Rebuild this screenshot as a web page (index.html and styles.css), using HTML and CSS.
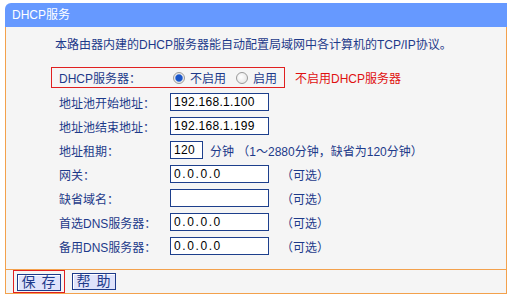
FILE: index.html
```html
<!DOCTYPE html>
<html lang="zh">
<head>
<meta charset="utf-8">
<title>DHCP服务</title>
<link rel="stylesheet" href="styles.css">
</head>
<body>
<div class="panel">
  <div class="head">DHCP服务</div>
  <div class="body">
    <p class="desc">本路由器内建的DHCP服务器能自动配置局域网中各计算机的TCP/IP协议。</p>
    <div class="switch-row">
      <div class="switch-box">
        <span class="label">DHCP服务器：</span>
        <span class="radio"><span class="dot on"></span>不启用</span>
        <span class="radio second"><span class="dot"></span>启用</span>
      </div>
      <span class="warn">不启用DHCP服务器</span>
    </div>
    <div class="row"><span class="label">地址池开始地址：</span><span class="field">192.168.1.100</span></div>
    <div class="row"><span class="label">地址池结束地址：</span><span class="field">192.168.1.199</span></div>
    <div class="row"><span class="label">地址租期：</span><span class="field short">120</span><span class="note unit">分钟 （1～2880分钟，缺省为120分钟）</span></div>
    <div class="row"><span class="label">网关：</span><span class="field zero">0.0.0.0</span><span class="note opt">（可选）</span></div>
    <div class="row"><span class="label">缺省域名：</span><span class="field"></span><span class="note opt">（可选）</span></div>
    <div class="row"><span class="label">首选DNS服务器：</span><span class="field zero">0.0.0.0</span><span class="note opt">（可选）</span></div>
    <div class="row"><span class="label">备用DNS服务器：</span><span class="field zero">0.0.0.0</span><span class="note opt">（可选）</span></div>
  </div>
  <div class="foot">
    <span class="hl"><span class="btn">保 存</span></span>
    <span class="btn help">帮 助</span>
  </div>
</div>
</body>
</html>
```
FILE: styles.css
```css
html, body {
  margin: 0;
  padding: 0;
  background: #ffffff;
}
body {
  font-family: "Liberation Sans", "Noto Sans CJK SC", sans-serif;
  font-size: 12px;
  color: #1d3a8a;
}
.panel {
  margin: 3px 0 0 5px;
  width: 502px;
}
.head {
  height: 24px;
  line-height: 24px;
  background: #6699ff;
  color: #ffffff;
  border-radius: 6px 0 0 0;
  padding-left: 7px;
  font-size: 12px;
}
.body {
  background: #f5f5f5;
  border-left: 1px solid #f3a14c;
  border-right: 1px solid #f3a14c;
  padding: 0 0 11px 0;
}
.desc {
  margin: 0;
  padding: 9px 0 0 49px;
  line-height: 18px;
}
.switch-row {
  display: flex;
  align-items: center;
  margin: 13px 0 2px 45px;
}
.switch-box {
  box-sizing: border-box;
  width: 234px;
  height: 21px;
  border: 1px solid #e02020;
  display: flex;
  align-items: center;
  padding-left: 7px;
}
.label {
  width: 111px;
  flex: none;
}
.radio {
  display: flex;
  align-items: center;
  margin-left: 3px;
}
.radio.second {
  margin-left: 10px;
}
.dot {
  box-sizing: border-box;
  width: 12px;
  height: 12px;
  border-radius: 50%;
  border: 1px solid #9a9a9a;
  background: radial-gradient(circle at 40% 40%, #ffffff 0%, #e6e6e6 80%);
  margin-right: 5px;
  display: inline-block;
}
.dot.on {
  background: radial-gradient(circle, #1a56c8 0 3px, #6f95e0 3.6px, #e8e8e8 4.2px, #f4f4f4 100%);
}
.warn {
  color: #e01010;
  margin-left: 10px;
}
.row {
  display: flex;
  align-items: center;
  height: 24px;
  padding-left: 53px;
}
.field {
  box-sizing: border-box;
  width: 99px;
  height: 18px;
  background: #ffffff;
  border: 1px solid #1d3f8c;
  padding-left: 3px;
  line-height: 16px;
  color: #000000;
  font-family: "Liberation Sans", sans-serif;
  font-size: 12px;
  letter-spacing: 0.3px;
}
.field.zero {
  letter-spacing: 1.6px;
}
.field.short {
  width: 33px;
}
.note.unit {
  margin-left: 7px;
}
.note.opt {
  margin-left: 12px;
}
.foot {
  background: #f5f5f5;
  border: 1px solid #f3a14c;
  height: 23px;
  display: flex;
  align-items: flex-start;
  padding-left: 7px;
}
.hl {
  box-sizing: border-box;
  height: 23px;
  border: 1px solid #e02020;
  padding: 3px;
  display: flex;
}
.btn {
  box-sizing: border-box;
  width: 44px;
  height: 17px;
  background: #dfe3fb;
  border: 1px solid #1d3a8a;
  box-shadow: inset 1px 1px 0 #ffffff;
  color: #1d3a8a;
  font-size: 14px;
  line-height: 15px;
  letter-spacing: 1px;
  text-align: center;
  display: block;
}
.btn.help {
  margin: 3px 0 0 7px;
}
```
